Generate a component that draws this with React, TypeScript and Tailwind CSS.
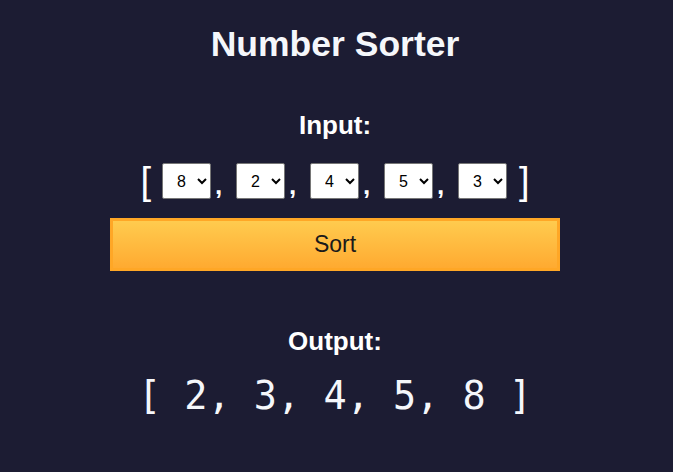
import React, { useState } from 'react';

const App = () => {
  const [values, setValues] = useState<number[]>([8, 2, 4, 5, 3]);
  const [sorted, setSorted] = useState<number[]>([2, 3, 4, 5, 8]);
  const options = [1, 2, 3, 4, 5, 6, 7, 8, 9];

  const update = (i: number, v: number) => {
    const next = [...values];
    next[i] = v;
    setValues(next);
  };

  return (
    <div className="min-h-[472px] w-full pr-[3px] bg-[#1c1c33] text-white flex flex-col items-center font-['Liberation_Sans',Arial,sans-serif]">
      <h1 className="mt-[24px] text-[35.5px] leading-[40px] font-bold text-[#f5f7fb]">Number Sorter</h1>

      <h2 className="mt-[46px] text-[26px] leading-[30px] font-bold">Input:</h2>

      <div className="mt-[21px] h-[40px] flex items-center">
        <span className="text-[38px] leading-[40px] mr-[11px]">[</span>
        {values.map((v, i) => (
          <div key={i} className="flex items-center">
            <select
              value={v}
              onChange={(e) => update(i, Number(e.target.value))}
              className="h-[36px] w-[49px] bg-white text-black text-[16px] border border-[#767676] rounded-[2px] pl-[10px]"
            >
              {options.map((o) => (
                <option key={o} value={o}>{o}</option>
              ))}
            </select>
            {i < values.length - 1 && (
              <span className="w-[25px] pl-[4px] text-[26px] leading-[30px] font-bold mt-[8px]">,</span>
            )}
          </div>
        ))}
        <span className="text-[38px] leading-[40px] ml-[12px]">]</span>
      </div>

      <button
        onClick={() => setSorted([...values].sort((a, b) => a - b))}
        className="mt-[17px] w-[450px] h-[53px] border-[3px] border-[#ffa726] bg-gradient-to-b from-[#ffcb4e] to-[#ffaa30] text-[#1a1a1a] text-[23px]"
      >
        Sort
      </button>

      <h2 className="mt-[55px] text-[26px] leading-[30px] font-bold">Output:</h2>

      <div className="mt-[18px] text-[38.5px] leading-[44px] whitespace-pre font-['DejaVu_Sans_Mono',monospace] text-[#f5f7fb]">
        {`[ ${sorted.join(', ')} ]`}
      </div>
    </div>
  );
};

export default App;
